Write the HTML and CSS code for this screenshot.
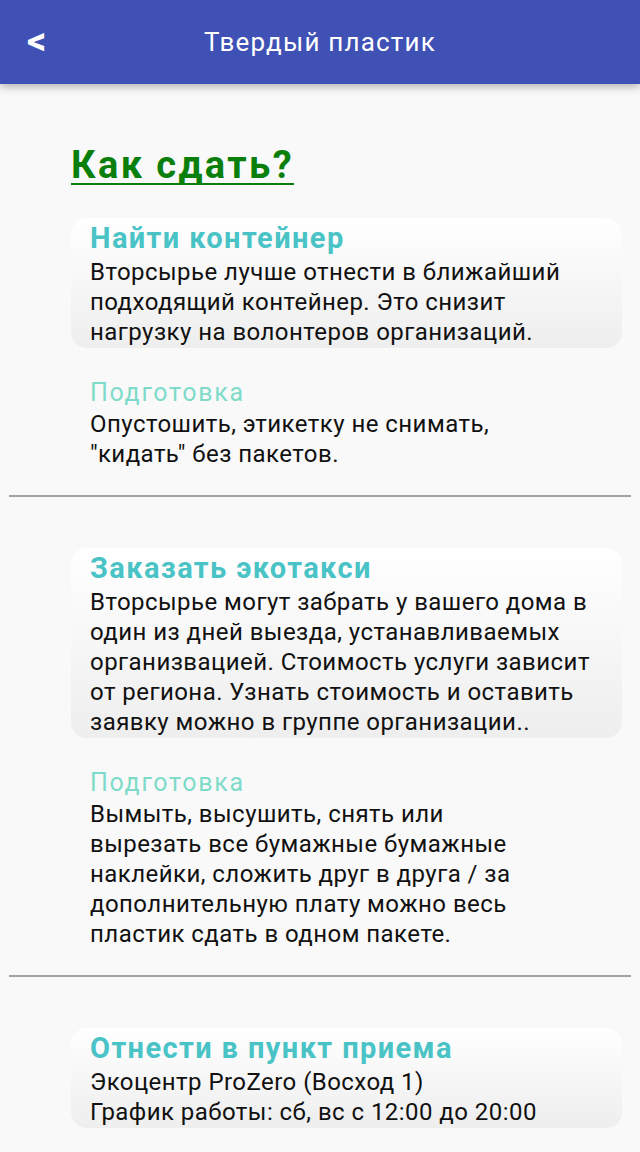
FILE: index.html
```html
<!DOCTYPE html>
<html lang="ru">
<head>
<meta charset="utf-8">
<title>Твердый пластик</title>
<link rel="stylesheet" href="styles.css">
</head>
<body>
<header class="appbar">
  <span class="back">&lt;</span>
  <h2 class="appbar-title">Твердый пластик</h2>
</header>
<main class="content">
  <h1 class="heading">Как сдать?</h1>

  <section class="block">
    <div class="card">
      <div class="card-title">Найти контейнер</div>
      <div class="text">Вторсырье лучше отнести в ближайший подходящий контейнер. Это снизит нагрузку на волонтеров организаций.</div>
    </div>
    <div class="prep-label">Подготовка</div>
    <div class="text">Опустошить, этикетку не снимать, "кидать" без пакетов.</div>
  </section>
  <hr class="divider">

  <section class="block">
    <div class="card">
      <div class="card-title">Заказать экотакси</div>
      <div class="text">Вторсырье могут забрать у вашего дома в один из дней выезда, устанавливаемых организвацией. Стоимость услуги зависит от региона. Узнать стоимость и оставить заявку можно в группе организации..</div>
    </div>
    <div class="prep-label">Подготовка</div>
    <div class="text">Вымыть, высушить, снять или вырезать все бумажные бумажные наклейки, сложить друг в друга / за дополнительную плату можно весь пластик сдать в одном пакете.</div>
  </section>
  <hr class="divider">

  <section class="block">
    <div class="card">
      <div class="card-title">Отнести в пункт приема</div>
      <div class="text">Экоцентр ProZero (Восход 1)<br>График работы: сб, вс с 12:00 до 20:00</div>
    </div>
  </section>
</main>
</body>
</html>
```
FILE: styles.css
```css
* { box-sizing: border-box; }
html, body {
  margin: 0;
  padding: 0;
  background: #f9f9f9;
  font-family: Roboto, "Noto Sans", sans-serif;
  width: 640px;
  height: 1152px;
  overflow: hidden;
}
.appbar {
  height: 84px;
  background: #3f51b5;
  display: flex;
  align-items: center;
  justify-content: center;
  position: relative;
  box-shadow: 0 3px 8px rgba(0,0,0,0.28);
  z-index: 2;
}
.back {
  position: absolute;
  left: 27px;
  top: 20px;
  color: #fff;
  font-size: 38px;
  font-weight: 700;
  line-height: 42px;
}
.appbar-title {
  margin: 0;
  color: #fff;
  font-size: 26px;
  font-weight: 400;
  line-height: 32px;
  letter-spacing: 1.2px;
}
.content {
  padding: 0 18px 0 71px;
}
.heading {
  margin: 56px 0 0;
  color: #0b7f0b;
  font-size: 38px;
  font-weight: 700;
  line-height: 50px;
  letter-spacing: 2.4px;
  text-decoration: underline;
  text-decoration-thickness: 2px;
  text-underline-offset: 5px;
  text-decoration-skip-ink: none;
  display: inline-block;
}
.block { margin-top: 28px; }
.block + .divider + .block { margin-top: 51px; }
.card {
  border-radius: 16px;
  background: linear-gradient(#ffffff, #eeeeee);
  padding: 1px 19px 1px;
}
.card-title {
  color: #49c3c6;
  font-size: 29px;
  font-weight: 700;
  line-height: 38px;
  letter-spacing: 1.4px;
}
.text {
  color: #111;
  font-size: 24px;
  line-height: 30px;
  letter-spacing: 0.45px;
}
.block > .text { padding: 0 97px 0 19px; }
.prep-label {
  margin-top: 29px;
  padding-left: 19px;
  color: #7fdbc9;
  font-size: 25px;
  line-height: 32px;
  letter-spacing: 1.7px;
}
.divider {
  margin: 26px -9px 0 -62px;
  border: 0;
  height: 2px;
  background: #a3a3a3;
}
```
